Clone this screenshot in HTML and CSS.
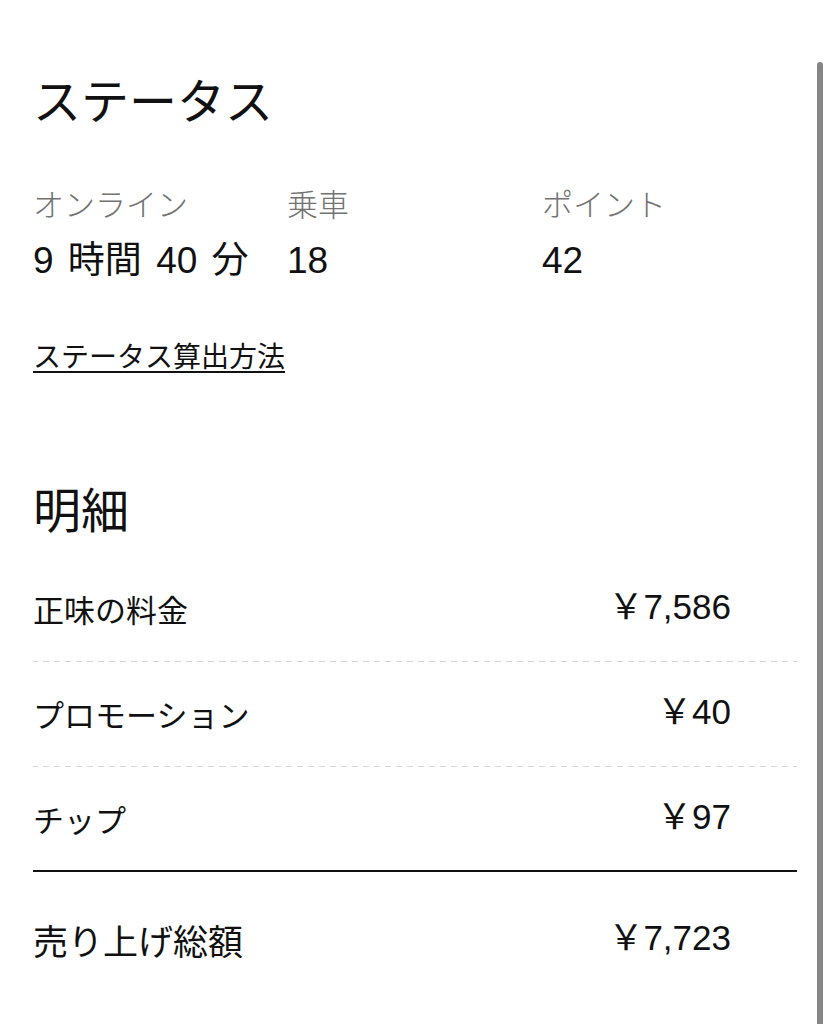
FILE: index.html
```html
<!DOCTYPE html>
<html lang="ja">
<head>
<meta charset="utf-8">
<link rel="stylesheet" href="styles.css">
</head>
<body>
<div class="scrollbar"></div>
<main class="page">
  <h1 class="title">ステータス</h1>
  <div class="stats">
    <div class="stat">
      <div class="stat-label">オンライン</div>
      <div class="stat-value">9 時間 40 分</div>
    </div>
    <div class="stat">
      <div class="stat-label">乗車</div>
      <div class="stat-value">18</div>
    </div>
    <div class="stat">
      <div class="stat-label">ポイント</div>
      <div class="stat-value">42</div>
    </div>
  </div>
  <a class="link" href="#">ステータス算出方法</a>
  <h2 class="title2">明細</h2>
  <div class="rows">
    <div class="row dashed"><span class="row-label">正味の料金</span><span class="amount">￥7,586</span></div>
    <div class="row dashed"><span class="row-label">プロモーション</span><span class="amount">￥40</span></div>
    <div class="row solid"><span class="row-label">チップ</span><span class="amount">￥97</span></div>
    <div class="row total"><span class="row-label total-label">売り上げ総額</span><span class="amount">￥7,723</span></div>
  </div>
</main>
</body>
</html>
```

FILE: styles.css
```css
html, body {
  margin: 0;
  padding: 0;
  background: #ffffff;
}
body {
  font-family: "Noto Sans CJK JP", "Noto Sans", sans-serif;
  color: #111111;
  width: 828px;
  height: 1024px;
  overflow: hidden;
  position: relative;
}
.scrollbar {
  position: absolute;
  left: 817px;
  top: 62px;
  width: 6px;
  height: 970px;
  border-radius: 3px;
  background: #858585;
}
.page {
  padding: 68px 31px 0 33px;
  width: 764px;
}
.title {
  margin: 0;
  font-size: 48px;
  line-height: 60px;
  font-weight: 400;
}
.stats {
  display: grid;
  grid-template-columns: 254px 255px 1fr;
  margin-top: 55px;
}
.stat-label {
  font-size: 31px;
  line-height: 40px;
  color: #737373;
  font-weight: 300;
}
.stat-value {
  font-family: "Liberation Sans", "Noto Sans CJK JP", sans-serif;
  font-size: 37px;
  line-height: 44px;
  margin-top: 16px;
  color: #111111;
  word-spacing: 4px;
}
.link {
  display: inline-block;
  margin-top: 53px;
  font-size: 28px;
  line-height: 38px;
  color: #111111;
  text-decoration: underline;
  text-underline-offset: 4px;
  text-decoration-thickness: 2px;
}
.title2 {
  margin: 103px 0 0;
  font-size: 48px;
  line-height: 60px;
  font-weight: 400;
}
.rows {
  margin-top: 20px;
}
.row {
  display: flex;
  justify-content: space-between;
  align-items: center;
  height: 104px;
  padding-right: 66px;
}
.row.dashed {
  border-bottom: 1px solid transparent;
  border-image: repeating-linear-gradient(to right, #d6d6d6 0 6px, transparent 6px 11px) 1;
}
.row.solid {
  border-bottom: 2px solid #111111;
  height: 103px;
}
.row.total {
  height: 136px;
}
.row-label {
  font-size: 31px;
  line-height: 40px;
}
.total-label {
  font-size: 35px;
  line-height: 44px;
}
.amount {
  font-family: "Liberation Sans", "Noto Sans CJK JP", sans-serif;
  font-size: 35px;
  line-height: 40px;
  margin-top: -4px;
}
```
